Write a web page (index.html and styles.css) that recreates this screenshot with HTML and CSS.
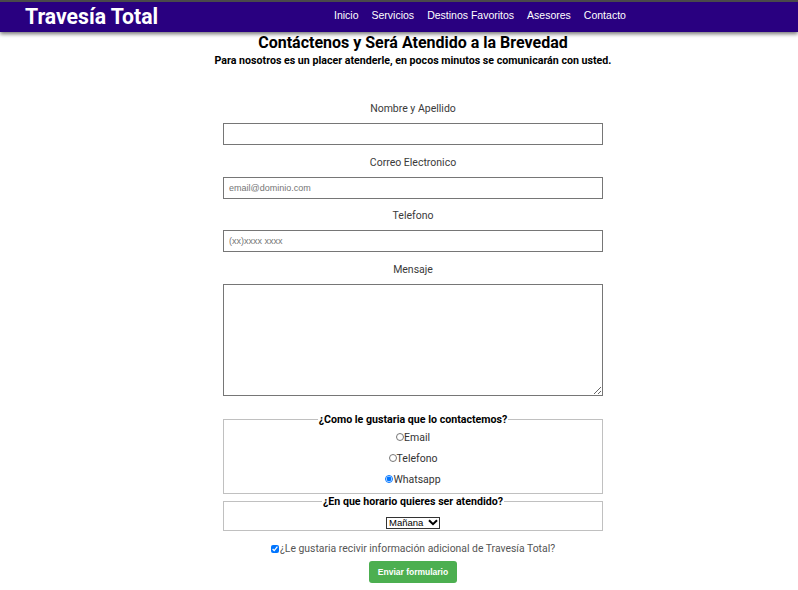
FILE: index.html
```html
<!DOCTYPE html>
<html lang="es">
<head>
<meta charset="utf-8">
<title>Travesía Total - Contacto</title>
<link rel="stylesheet" href="styles.css">
</head>
<body>
<header class="topbar">
  <div class="brand">Travesía Total</div>
  <nav class="nav">
    <a href="#">Inicio</a>
    <a href="#">Servicios</a>
    <a href="#">Destinos Favoritos</a>
    <a href="#">Asesores</a>
    <a href="#">Contacto</a>
  </nav>
</header>
<main class="contact">
  <h1 class="title">Contáctenos y Será Atendido a la Brevedad</h1>
  <p class="subtitle">Para nosotros es un placer atenderle, en pocos minutos se comunicarán con usted.</p>
  <form class="form">
    <label class="field-label" for="nombre">Nombre y Apellido</label>
    <input class="field" id="nombre" type="text">
    <label class="field-label" for="correo">Correo Electronico</label>
    <input class="field" id="correo" type="email" placeholder="email@dominio.com">
    <label class="field-label" for="tel">Telefono</label>
    <input class="field" id="tel" type="tel" placeholder="(xx)xxxx xxxx">
    <label class="field-label" for="msg">Mensaje</label>
    <textarea class="field area" id="msg"></textarea>
    <fieldset class="group">
      <legend class="group-title">¿Como le gustaria que lo contactemos?</legend>
      <label class="opt"><input type="radio" name="via">Email</label>
      <label class="opt"><input type="radio" name="via">Telefono</label>
      <label class="opt"><input type="radio" name="via" checked>Whatsapp</label>
    </fieldset>
    <fieldset class="group group-time">
      <legend class="group-title">¿En que horario quieres ser atendido?</legend>
      <span class="sel-box">
        <select class="sel">
          <option>Mañana</option>
          <option>Tarde</option>
          <option>Noche</option>
        </select>
        <svg class="chev" width="10" height="7" viewBox="0 0 10 7" aria-hidden="true"><path d="M1 1.2 L5 5.2 L9 1.2" fill="none" stroke="#000" stroke-width="2"/></svg>
      </span>
    </fieldset>
    <label class="check"><input type="checkbox" checked>¿Le gustaria recivir información adicional de Travesía Total?</label>
    <button class="send" type="submit">Enviar formulario</button>
  </form>
</main>
</body>
</html>
```
FILE: styles.css
```css
* { box-sizing: border-box; }
body {
  margin: 0;
  font-family: Roboto, "Liberation Sans", sans-serif;
  background: #fff;
  color: #000;
}
.topbar {
  height: 32px;
  border-top: 2px solid #4a4a4a;
  background: #290080;
  box-shadow: 0 2px 4px rgba(0,0,0,0.55);
  display: flex;
  align-items: center;
  padding-left: 25px;
}
.brand {
  font-family: Roboto, sans-serif;
  font-weight: 700;
  font-size: 21.2px;
  color: #fff;
  width: 309px;
  line-height: 28px;
}
.nav {
  display: flex;
  gap: 13px;
  padding-bottom: 4px;
}
.nav a {
  font-family: "Liberation Sans", Arial, sans-serif;
  font-size: 10.5px;
  color: #fff;
  text-decoration: none;
}
.contact {
  padding-left: 28px;
  text-align: center;
}
.title {
  margin: 1px 0 0;
  font-size: 16px;
  font-weight: 700;
  line-height: 20px;
}
.subtitle {
  margin: 1px 0 0;
  font-size: 10.65px;
  font-weight: 700;
  line-height: 13px;
}
.form {
  width: 380px;
  margin: 35px auto 0;
  display: flex;
  flex-direction: column;
  align-items: center;
}
.field-label {
  font-size: 10.5px;
  color: #3a3a3a;
  line-height: 13px;
  margin-bottom: 8px;
}
.field {
  width: 380px;
  height: 22px;
  border: 1px solid #767676;
  padding: 0 5px;
  font-family: "Liberation Sans", Arial, sans-serif;
  font-size: 9px;
  margin: 0 0 10.5px;
}
.field::placeholder { color: #757575; }
.area {
  height: 112px;
  resize: vertical;
  margin-bottom: 18px;
}
.group {
  width: 380px;
  margin: 0;
  border: 1px solid #c0c0c0;
  padding: 1px 0 3px;
  display: flex;
  flex-direction: column;
  align-items: center;
}
.group-title {
  margin: 0 auto;
  padding: 0 1px;
  font-size: 10.65px;
  font-weight: 700;
  line-height: 12px;
}
.opt {
  font-size: 10.5px;
  color: #333;
  line-height: 21px;
  display: flex;
  align-items: center;
}
.opt input {
  margin: 0;
  width: 8px;
  height: 8px;
}
.group-time {
  margin-top: 2px;
  padding: 9px 0 1px;
}
.sel-box {
  display: inline-flex;
  align-items: center;
  width: 54px;
  height: 12px;
  border: 1px solid #333;
  background: #fff;
}
.sel {
  appearance: none;
  -webkit-appearance: none;
  border: none;
  background: transparent;
  font-family: "Liberation Sans", Arial, sans-serif;
  font-size: 9.5px;
  height: 10px;
  line-height: 10px;
  width: 40px;
  padding: 0 0 0 2px;
  margin: 0;
  color: #000;
}
.chev {
  margin-left: 1px;
}
.check {
  margin-top: 11px;
  font-size: 10.4px;
  color: #555;
  display: flex;
  align-items: center;
  line-height: 14px;
}
.check input {
  margin: 0 1px 0 0;
  width: 8px;
  height: 8px;
}
.send {
  margin-top: 5px;
  width: 88px;
  height: 22px;
  background: #4caf50;
  color: #fff;
  border: none;
  border-radius: 3px;
  font-family: "Liberation Sans", Arial, sans-serif;
  font-size: 8.5px;
  font-weight: 700;
  padding: 0;
}
```
